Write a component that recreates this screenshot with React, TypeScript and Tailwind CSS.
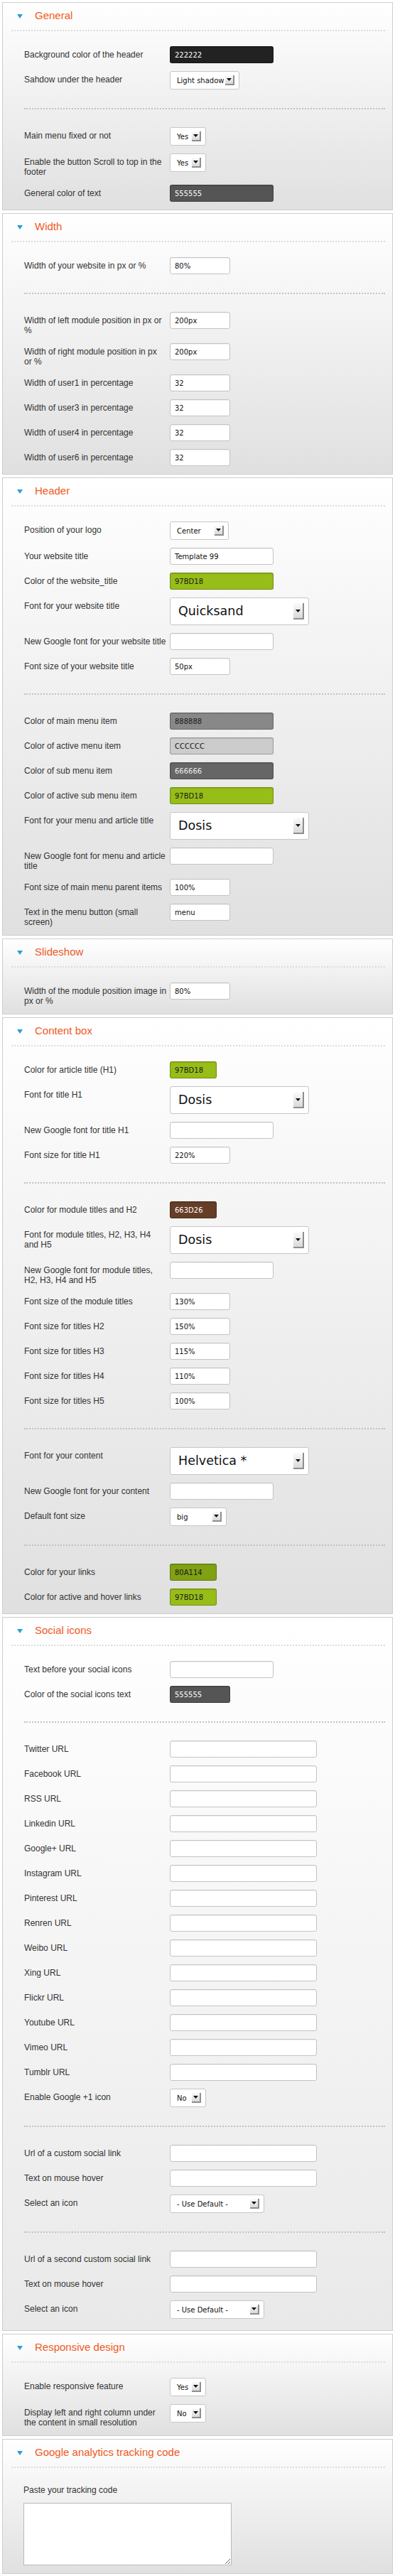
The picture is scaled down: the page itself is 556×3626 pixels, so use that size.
import React from 'react'
import clsx from 'clsx'

type Row =
  | { kind: 'color'; label: string[]; value: string; cls: string }
  | { kind: 'text'; label: string[]; value?: string; cls: string }
  | { kind: 'select'; label: string[]; value: string; cls: string }
  | { kind: 'font'; label: string[]; value: string }

type Section = {
  title: string
  groups: Row[][]
  end?: string
  pad?: string
}

const W_COLOR = 'w-[146px]'
const W_SHORT = 'w-[85px]'
const W_URL = 'w-[207px]'
const W_SWATCH = 'w-[66px]'
const W_YESNO = 'w-[51px]'

const color = (label: string | string[], value: string, cls: string): Row => ({
  kind: 'color',
  label: Array.isArray(label) ? label : [label],
  value,
  cls,
})
const text = (label: string | string[], cls: string, value = ''): Row => ({
  kind: 'text',
  label: Array.isArray(label) ? label : [label],
  value,
  cls,
})
const select = (label: string | string[], value: string, cls: string): Row => ({
  kind: 'select',
  label: Array.isArray(label) ? label : [label],
  value,
  cls,
})
const font = (label: string | string[], value: string): Row => ({
  kind: 'font',
  label: Array.isArray(label) ? label : [label],
  value,
})

const socials = [
  'Twitter URL',
  'Facebook URL',
  'RSS URL',
  'Linkedin URL',
  'Google+ URL',
  'Instagram URL',
  'Pinterest URL',
  'Renren URL',
  'Weibo URL',
  'Xing URL',
  'Flickr URL',
  'Youtube URL',
  'Vimeo URL',
  'Tumblr URL',
]

const sections: Section[] = [
  {
    title: 'General',
    groups: [
      [
        color('Background color of the header', '222222', 'w-[146px] bg-[#222222] text-white'),
        select('Sahdow under the header', 'Light shadow', 'w-[98px]'),
      ],
      [
        select('Main menu fixed or not', 'Yes', W_YESNO),
        select(['Enable the button Scroll to top in the', 'footer'], 'Yes', W_YESNO),
        color('General color of text', '555555', 'w-[146px] bg-[#555555] text-white'),
      ],
    ],
  },
  {
    title: 'Width',
    groups: [
      [text('Width of your website in px or %', W_SHORT, '80%')],
      [
        text(['Width of left module position in px or', '%'], W_SHORT, '200px'),
        text(['Width of right module position in px', 'or %'], W_SHORT, '200px'),
        text('Width of user1 in percentage', W_SHORT, '32'),
        text('Width of user3 in percentage', W_SHORT, '32'),
        text('Width of user4 in percentage', W_SHORT, '32'),
        text('Width of user6 in percentage', W_SHORT, '32'),
      ],
    ],
  },
  {
    title: 'Header',
    groups: [
      [
        select('Position of your logo', 'Center', 'w-[83px]'),
        text('Your website title', W_COLOR, 'Template 99'),
        color('Color of the website_title', '97BD18', 'w-[146px] bg-[#97bd18] text-[#1a1a1a]'),
        font('Font for your website title', 'Quicksand'),
        text('New Google font for your website title', W_COLOR),
        text('Font size of your website title', W_SHORT, '50px'),
      ],
      [
        color('Color of main menu item', '888888', 'w-[146px] bg-[#888888] text-[#1a1a1a]'),
        color('Color of active menu item', 'CCCCCC', 'w-[146px] bg-[#cccccc] text-[#1a1a1a]'),
        color('Color of sub menu item', '666666', 'w-[146px] bg-[#666666] text-[#eeeeee]'),
        color('Color of active sub menu item', '97BD18', 'w-[146px] bg-[#97bd18] text-[#1a1a1a]'),
        font('Font for your menu and article title', 'Dosis'),
        text(['New Google font for menu and article', 'title'], W_COLOR),
        text('Font size of main menu parent items', W_SHORT, '100%'),
        text(['Text in the menu button (small', 'screen)'], W_SHORT, 'menu'),
      ],
    ],
  },
  {
    title: 'Slideshow',
    groups: [[text(['Width of the module position image in', 'px or %'], W_SHORT, '80%')]],
  },
  {
    title: 'Content box',
    groups: [
      [
        color('Color for article title (H1)', '97BD18', 'w-[66px] bg-[#97bd18] text-[#1a1a1a]'),
        font('Font for title H1', 'Dosis'),
        text('New Google font for title H1', W_COLOR),
        text('Font size for title H1', W_SHORT, '220%'),
      ],
      [
        color('Color for module titles and H2', '663D26', 'w-[66px] bg-[#663d26] text-white'),
        font(['Font for module titles, H2, H3, H4', 'and H5'], 'Dosis'),
        text(['New Google font for module titles,', 'H2, H3, H4 and H5'], W_COLOR),
        text('Font size of the module titles', W_SHORT, '130%'),
        text('Font size for titles H2', W_SHORT, '150%'),
        text('Font size for titles H3', W_SHORT, '115%'),
        text('Font size for titles H4', W_SHORT, '110%'),
        text('Font size for titles H5', W_SHORT, '100%'),
      ],
      [
        font('Font for your content', 'Helvetica *'),
        text('New Google font for your content', W_COLOR),
        select('Default font size', 'big', 'w-[80px]'),
      ],
      [
        color('Color for your links', '80A114', 'w-[66px] bg-[#80a114] text-[#1a1a1a]'),
        color('Color for active and hover links', '97BD18', 'w-[66px] bg-[#97bd18] text-[#1a1a1a]'),
      ],
    ],
  },
  {
    title: 'Social icons',
    end: 'to-[#e9e9e9]',
    pad: 'pb-[16px]',
    groups: [
      [
        text('Text before your social icons', W_COLOR),
        color('Color of the social icons text', '555555', 'w-[85px] bg-[#555555] text-white'),
      ],
      [...socials.map((s) => text(s, W_URL)), select('Enable Google +1 icon', 'No', W_YESNO)],
      [
        text('Url of a custom social link', W_URL),
        text('Text on mouse hover', W_URL),
        select('Select an icon', '- Use Default -', 'w-[133px]'),
      ],
      [
        text('Url of a second custom social link', W_URL),
        text('Text on mouse hover', W_URL),
        select('Select an icon', '- Use Default -', 'w-[133px]'),
      ],
    ],
  },
  {
    title: 'Responsive design',
    groups: [
      [
        select('Enable responsive feature', 'Yes', W_YESNO),
        select(['Display left and right column under', 'the content in small resolution'], 'No', W_YESNO),
      ],
    ],
  },
]

const valueFont = "font-['DejaVu_Sans',sans-serif]"

const Arrow = ({ big }: { big?: boolean }) => (
  <span
    className={clsx(
      'flex shrink-0 justify-center border-r-2 border-b-2 border-[#8e8e8e] bg-linear-to-b from-[#fbfbfb] to-[#d9d9d9]',
      big ? 'h-[23px] w-[15px] pt-[9px]' : 'h-[14px] w-[13px] pt-[4px]'
    )}
  >
    <svg width="7" height="4" viewBox="0 0 7 4">
      <path d="M0 0h7L3.5 4z" fill="#111" />
    </svg>
  </span>
)

const Control = ({ row }: { row: Row }) => {
  if (row.kind === 'font') {
    return (
      <div
        className={clsx(
          'flex h-[39px] w-[196px] items-center justify-between rounded-[3px] border border-[#c6c6c6] bg-white pr-[6px] pl-[11px] text-[17.5px] text-[#111]',
          valueFont
        )}
      >
        <span>{row.value}</span>
        <Arrow big />
      </div>
    )
  }
  if (row.kind === 'select') {
    return (
      <div
        className={clsx(
          'flex h-[26px] items-center justify-between rounded-[3px] border border-[#c6c6c6] bg-white pr-[6px] pl-[9px] text-[10px] text-[#111]',
          valueFont,
          row.cls
        )}
      >
        <span>{row.value}</span>
        <Arrow />
      </div>
    )
  }
  if (row.kind === 'color') {
    return (
      <input
        type="text"
        readOnly
        defaultValue={row.value}
        className={clsx(
          'h-[24px] rounded-[3px] border border-black/25 pl-[6px] text-[10px] outline-none shadow-[inset_0_1px_1px_rgba(0,0,0,0.1)]',
          valueFont,
          row.cls
        )}
      />
    )
  }
  return (
    <input
      type="text"
      readOnly
      defaultValue={row.value}
      className={clsx(
        'h-[24px] rounded-[3px] border border-[#c3c3c3] bg-white pl-[6px] text-[10px] text-[#111] outline-none shadow-[inset_0_1px_1px_rgba(0,0,0,0.06)]',
        valueFont,
        row.cls
      )}
    />
  )
}

const Label = ({ lines }: { lines: string[] }) => (
  <div className="w-[205px] shrink-0 pt-[5px] text-[12px] leading-[14px] whitespace-nowrap text-[#333]">
    {lines.map((l, i) => (
      <React.Fragment key={i}>
        {i > 0 && <br />}
        {l}
      </React.Fragment>
    ))}
  </div>
)

const Heading = ({ title }: { title: string }) => (
  <div className="mr-[10px] ml-[12px] flex h-[40px] items-center border-b-2 border-dotted border-[#dcdcdc] pb-[2px]">
    <svg className="ml-[8px] mt-[2px]" width="8" height="6" viewBox="0 0 8 6">
      <path d="M0 0h8L4 6z" fill="#2c9fd4" />
    </svg>
    <h2 className="ml-[17px] text-[15px] text-[#f05a23]">{title}</h2>
  </div>
)

const Panel = ({ section }: { section: Section }) => (
  <section
    className={clsx(
      'border border-[#cdcdcd] bg-linear-to-b from-white',
      section.end ?? 'to-[#e0e0e0]'
    )}
  >
    <Heading title={section.title} />
    <div className={clsx('pt-[21px] pr-[10px] pl-[30px]', section.pad ?? 'pb-[11px]')}>
      {section.groups.map((group, gi) => (
        <React.Fragment key={gi}>
          {gi > 0 && <div className="mt-[26px] mb-[25px] border-t-2 border-dotted border-[#c2c2c2]" />}
          <div className="flex flex-col gap-[11px]">
            {group.map((row, ri) => (
              <div key={ri} className="flex items-start">
                <Label lines={row.label} />
                <Control row={row} />
              </div>
            ))}
          </div>
        </React.Fragment>
      ))}
    </div>
  </section>
)

export default function App() {
  return (
    <div className="flex min-h-[3626px] flex-col gap-[4px] bg-white px-[3px] pt-[3px] pb-[4px] font-['Liberation_Sans',Arial,sans-serif]">
      {sections.map((s) => (
        <Panel key={s.title} section={s} />
      ))}

      <section className="border border-[#cdcdcd] bg-linear-to-b from-white to-[#e0e0e0]">
        <Heading title="Google analytics tracking code" />
        <div className="pt-[24px] pr-[10px] pb-[11px] pl-[29px]">
          <div className="text-[12px] leading-[14px] text-[#333]">Paste your tracking code</div>
          <textarea className="mt-[11px] block h-[88px] w-[293px] border border-[#b9b9b9] bg-white outline-none" />
        </div>
      </section>
    </div>
  )
}
